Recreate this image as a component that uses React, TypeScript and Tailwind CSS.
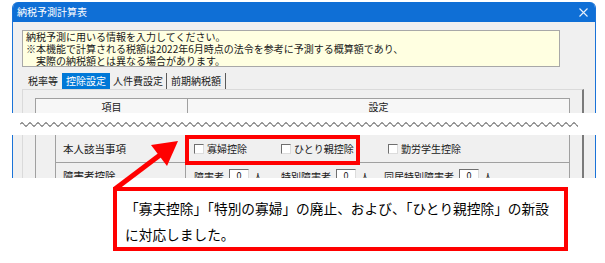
import React from "react";

const wave = (() => {
  let d = "M0 3 q2 -3.5 4 0";
  for (let i = 0; i < 139; i++) d += " t4 0";
  return d;
})();

const Checkbox: React.FC<{ label: string; width?: string }> = ({ label, width }) => (
  <div className={`flex items-center gap-[3px] ${width ?? ""}`}>
    <span className="h-[10px] w-[10px] border border-t-[#6f6f6f] border-l-[#6f6f6f] border-b-[#dcdcdc] border-r-[#dcdcdc] bg-white" />
    <span>{label}</span>
  </div>
);

const Count: React.FC<{ label: string; width: string }> = ({ label, width }) => (
  <div className={`flex items-center ${width}`}>
    <span>{label}</span>
    <span className="ml-[5px] flex h-[14px] w-[20px] items-center justify-center border border-t-[#6f6f6f] border-l-[#6f6f6f] border-b-[#dcdcdc] border-r-[#dcdcdc] bg-white text-[9px]">0</span>
    <span className="ml-[4px]">人</span>
  </div>
);

export default function App() {
  return (
    <div className="relative h-[263px] w-[605px] overflow-hidden bg-white font-['Noto_Sans_CJK_JP',sans-serif] text-[10px] text-[#1a1a1a]">
      {/* upper part of the dialog */}
      <div className="ml-[12px] mt-[2px] h-[111px] w-[584px] overflow-hidden rounded-t-[6px] border-x border-[#1a73d8] bg-[#f0f0f0]">
        <div className="flex h-[20px] items-center justify-between bg-[#0f6fd6] pl-[4px] pr-[7px] text-white">
          <span className="leading-none">納税予測計算表</span>
          <svg width="9" height="9" viewBox="0 0 9 9">
            <path d="M0.5 0.5 L8.5 8.5 M8.5 0.5 L0.5 8.5" stroke="#e8f0fb" strokeWidth="1.1" />
          </svg>
        </div>
        <div className="px-[9px] pt-[8px]">
          <div className="h-[37px] w-[538px] border border-[#a8a8a8] bg-[#ffffe1] px-[3px] leading-[12px]">
            <div>納税予測に用いる情報を入力してください。</div>
            <div>※本機能で計算される税額は2022年6月時点の法令を参考に予測する概算額であり、</div>
            <div className="pl-[10px]">実際の納税額とは異なる場合があります。</div>
          </div>
          <div className="mt-[6px] flex h-[16px] items-stretch pl-[6px] leading-[16px]">
            <span className="pr-[4px]">税率等</span>
            <span className="bg-[#0078d7] px-[4px] text-white">控除設定</span>
            <span className="border-r border-[#5a5a5a] px-[3px]">人件費設定</span>
            <span className="border-r border-[#5a5a5a] px-[4px]">前期納税額</span>
          </div>
          <div className="h-[40px] w-[562px] border-l border-t border-[#dadada] border-r-2 border-r-[#7a7a7a] pl-[12px] pt-[8px]">
            <div className="flex h-[17px] w-[535px] border border-[#a0a0a0] bg-[#f7f7f7] leading-[15px]">
              <div className="w-[152px] border-r border-[#a0a0a0] text-center">項目</div>
              <div className="flex-1 text-center">設定</div>
            </div>
          </div>
        </div>
      </div>

      {/* break mark */}
      <div className="flex h-[22px] items-center pl-[20px]">
        <svg width="558" height="7" viewBox="0 0 558 7">
          <path d={wave} transform="translate(0 0.5)" fill="none" stroke="#4a4a4a" strokeWidth="1" />
        </svg>
      </div>

      {/* lower part of the dialog */}
      <div className="ml-[12px] h-[43px] w-[584px] overflow-hidden border-x border-[#1a73d8] bg-[#f0f0f0] px-[9px]">
        <div className="h-full w-[562px] border-l border-[#dadada] border-r-2 border-r-[#7a7a7a] pl-[12px]">
          <div className="flex h-[60px] w-[535px] border-x border-[#a0a0a0]">
            <div className="w-[20px] border-r border-[#a0a0a0]" />
            <div className="flex flex-1 flex-col">
              <div className="flex h-[28px] border-b border-[#a0a0a0]">
                <div className="flex w-[130px] items-center border-r border-[#a0a0a0] pl-[7px] text-[10.5px]">本人該当事項</div>
                <div className="flex flex-1 items-center pl-[8px]">
                  <Checkbox label="寡婦控除" width="w-[87px]" />
                  <Checkbox label="ひとり親控除" width="w-[107px]" />
                  <Checkbox label="勤労学生控除" />
                </div>
              </div>
              <div className="flex h-[26px]">
                <div className="flex w-[130px] items-center border-r border-[#a0a0a0] pl-[7px] text-[10.5px]">障害者控除</div>
                <div className="flex flex-1 items-center pl-[8px]">
                  <Count label="障害者" width="w-[87px]" />
                  <Count label="特別障害者" width="w-[103px]" />
                  <Count label="同居特別障害者" width="w-[110px]" />
                </div>
              </div>
            </div>
          </div>
        </div>
      </div>

      {/* annotation */}
      <div className="absolute left-[185px] top-[135px] h-[30px] w-[175px] border-4 border-[#ff0000]" />
      <svg className="absolute left-0 top-0" width="605" height="263" viewBox="0 0 605 263">
        <line x1="115" y1="189" x2="160" y2="155" stroke="#ff0000" strokeWidth="5" />
        <polygon points="178,141 167,166 151,145" fill="#ff0000" />
      </svg>
      <div className="absolute left-[113px] top-[187px] h-[64px] w-[455px] border-4 border-[#ff0000] bg-white pl-[8px] pt-[4px] text-[13.7px] leading-[26px] text-black">
        <div>「寡夫控除」「特別の寡婦」の廃止、および、「ひとり親控除」の新設</div>
        <div>に対応しました。</div>
      </div>
    </div>
  );
}
